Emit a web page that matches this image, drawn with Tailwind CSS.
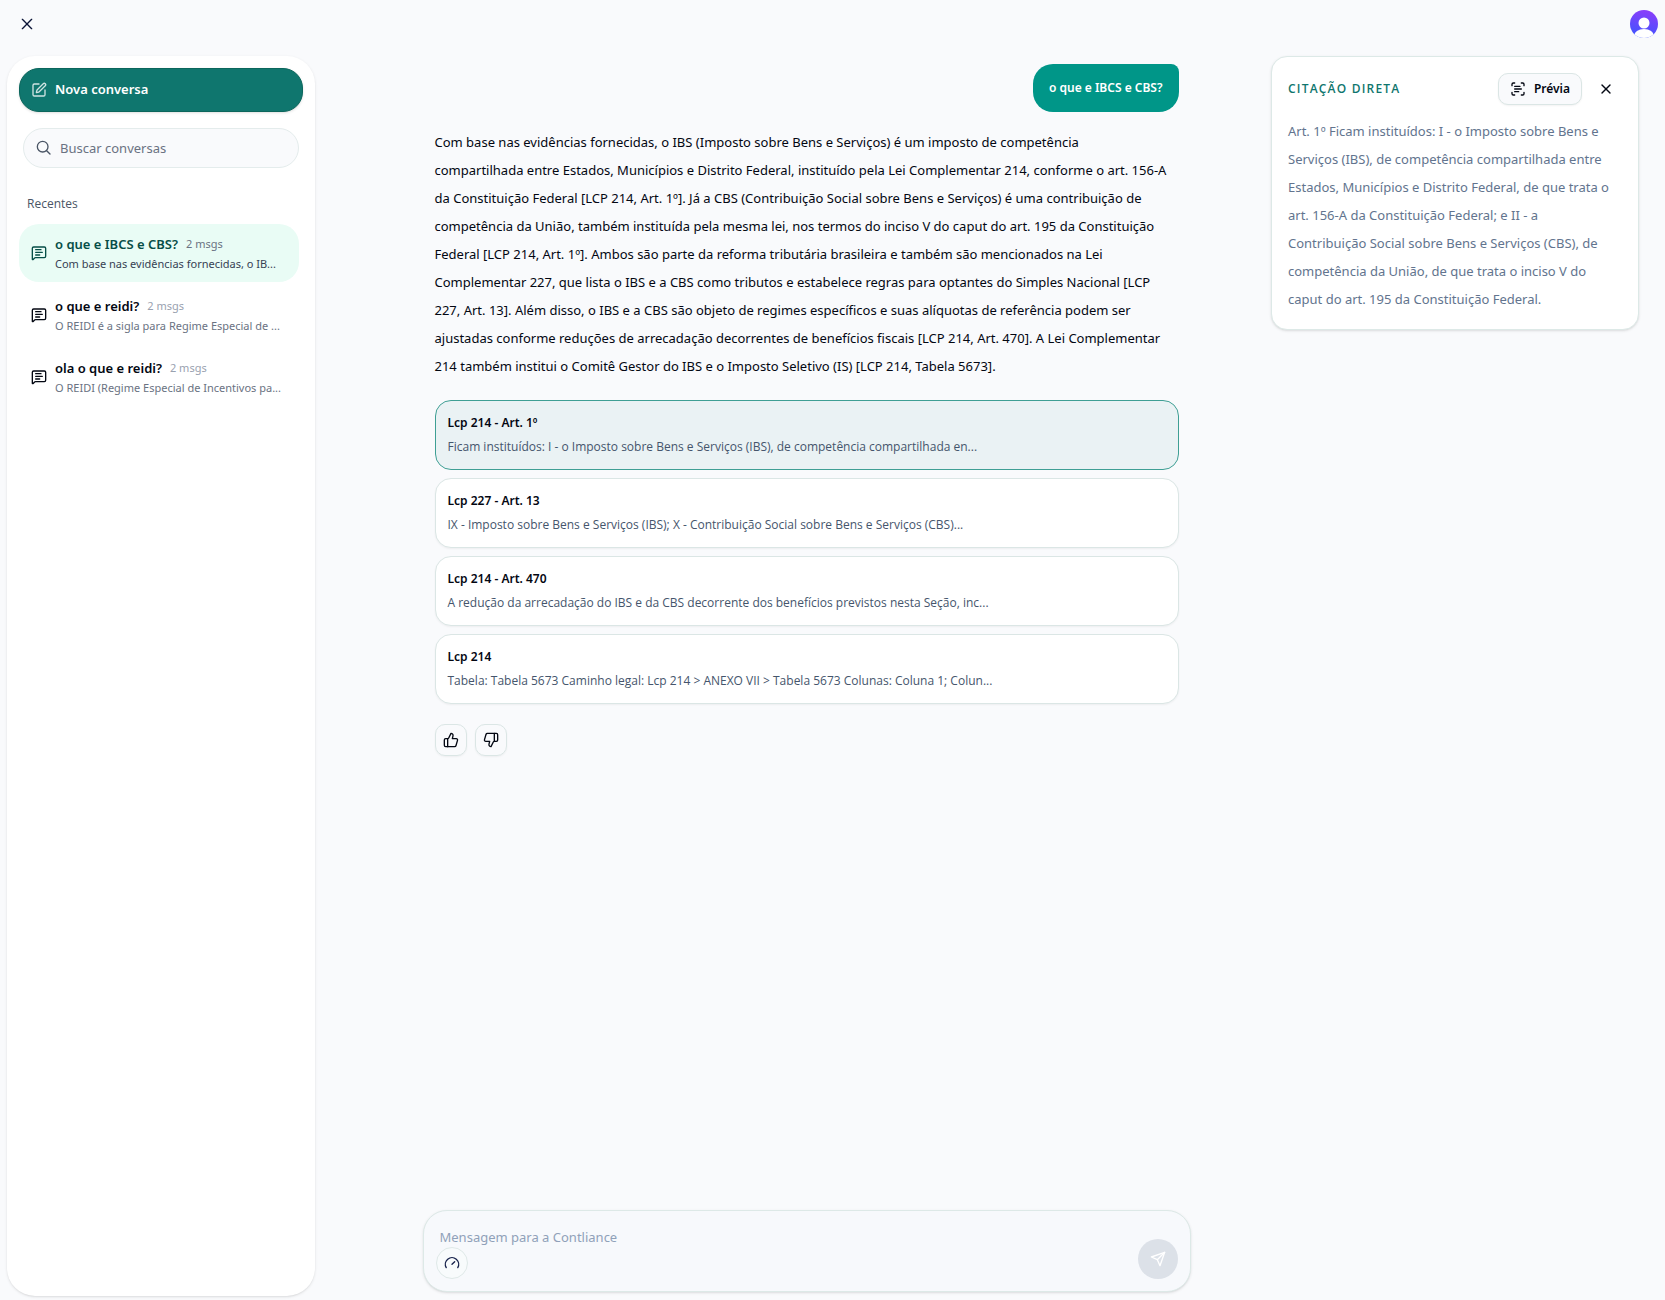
<!DOCTYPE html>
<html lang="pt-BR">
<head>
    <meta charset="UTF-8">
    <meta name="viewport" content="width=device-width, initial-scale=1.0">
    <title>Contliance</title>
    <script src="https://cdn.jsdelivr.net/npm/@tailwindcss/browser@4"></script>
</head>
<body class="flex h-screen flex-col overflow-hidden bg-[#f9fafc] font-['Noto_Sans',sans-serif] text-[13px] text-gray-950">
    <!-- Topo -->
    <header class="flex h-12 shrink-0 items-center justify-between pl-[19px] pr-[7px]">
        <button type="button" aria-label="Fechar menu" class="text-[#0b1437]">
            <svg class="size-4" viewBox="0 0 24 24" fill="none" stroke="currentColor" stroke-width="2" stroke-linecap="round" stroke-linejoin="round"><path d="M19 5 5 19"/><path d="m5 5 14 14"/></svg>
        </button>
        <button type="button" aria-label="Conta">
            <svg class="size-7" viewBox="0 0 28 28">
                <defs>
                    <linearGradient id="avatar" x1="0.6" y1="0" x2="0.4" y2="1">
                        <stop offset="0" stop-color="#8b3dfa"/>
                        <stop offset="1" stop-color="#3d55ff"/>
                    </linearGradient>
                    <clipPath id="circle"><circle cx="14" cy="14" r="14"/></clipPath>
                </defs>
                <g clip-path="url(#circle)">
                    <rect width="28" height="28" fill="url(#avatar)"/>
                    <circle cx="14" cy="13" r="5.5" fill="#fff"/>
                    <ellipse cx="14" cy="26" rx="10" ry="7" fill="#fff"/>
                </g>
            </svg>
        </button>
    </header>

    <div class="flex min-h-0 flex-1 pl-[7px] pr-[26px] pt-2">
        <!-- Barra lateral -->
        <aside class="mb-1 w-[308px] shrink-0 rounded-[28px] bg-white p-3 shadow-sm">
            <button type="button" class="flex h-11 w-full items-center gap-2 rounded-[20px] border border-[#0b665c] bg-[#0f766e] px-[11px] font-semibold text-white shadow-sm">
                <svg class="size-4 opacity-80" viewBox="0 0 24 24" fill="none" stroke="currentColor" stroke-width="2" stroke-linecap="round" stroke-linejoin="round"><path d="M12 3H5a2 2 0 0 0-2 2v14a2 2 0 0 0 2 2h14a2 2 0 0 0 2-2v-7"/><path d="M18.375 2.625a1 1 0 0 1 3 3l-9.013 9.014a2 2 0 0 1-.853.505l-2.873.84a.5.5 0 0 1-.62-.62l.84-2.873a2 2 0 0 1 .506-.852z"/></svg>
                Nova conversa
            </button>

            <label class="mx-1 mt-4 flex h-10 items-center gap-2 rounded-full border border-[#e4ecec] bg-[#f9fafc] px-3">
                <svg class="size-4 shrink-0 text-gray-600" viewBox="0 0 24 24" fill="none" stroke="currentColor" stroke-width="2" stroke-linecap="round" stroke-linejoin="round"><circle cx="10" cy="10" r="8"/><path d="m21 21-5-5"/></svg>
                <input type="search" aria-label="Buscar conversas" placeholder="Buscar conversas" class="w-full bg-transparent pt-px outline-none placeholder:text-gray-500">
            </label>

            <h2 class="mt-6 pl-2 font-['Open_Sans',sans-serif] text-xs leading-6 text-gray-600">Recentes</h2>

            <nav class="mr-1 mt-2 flex flex-col gap-1">
                <a href="#" class="flex h-[58px] items-center gap-2 rounded-[20px] bg-[#e9fcf5] px-3 text-[#064e47]">
                    <svg class="size-4 shrink-0" viewBox="0 0 24 24" fill="none" stroke="currentColor" stroke-width="2" stroke-linecap="round" stroke-linejoin="round"><path d="M22 17a2 2 0 0 1-2 2H6.828a2 2 0 0 0-1.414.586l-2.202 2.202A.71.71 0 0 1 2 21.286V5a2 2 0 0 1 2-2h16a2 2 0 0 1 2 2z"/><path d="M7 7h8"/><path d="M7 11h10"/><path d="M7 15h6"/></svg>
                    <div class="min-w-0 whitespace-nowrap pt-[2px]">
                        <p class="flex items-center gap-2 leading-5"><span class="font-semibold">o que e IBCS e CBS?</span><span class="text-[11px] text-gray-500">2 msgs</span></p>
                        <p class="text-[11px] leading-5 text-gray-700">Com base nas evidências fornecidas, o IB...</p>
                    </div>
                </a>
                <a href="#" class="flex h-[58px] items-center gap-2 rounded-[20px] px-3">
                    <svg class="size-4 shrink-0" viewBox="0 0 24 24" fill="none" stroke="currentColor" stroke-width="2" stroke-linecap="round" stroke-linejoin="round"><path d="M22 17a2 2 0 0 1-2 2H6.828a2 2 0 0 0-1.414.586l-2.202 2.202A.71.71 0 0 1 2 21.286V5a2 2 0 0 1 2-2h16a2 2 0 0 1 2 2z"/><path d="M7 7h8"/><path d="M7 11h10"/><path d="M7 15h6"/></svg>
                    <div class="min-w-0 whitespace-nowrap pt-[2px]">
                        <p class="flex items-center gap-2 leading-5"><span class="font-semibold">o que e reidi?</span><span class="text-[11px] text-gray-400">2 msgs</span></p>
                        <p class="text-[11px] leading-5 text-gray-500">O REIDI é a sigla para Regime Especial de ...</p>
                    </div>
                </a>
                <a href="#" class="flex h-[58px] items-center gap-2 rounded-[20px] px-3">
                    <svg class="size-4 shrink-0" viewBox="0 0 24 24" fill="none" stroke="currentColor" stroke-width="2" stroke-linecap="round" stroke-linejoin="round"><path d="M22 17a2 2 0 0 1-2 2H6.828a2 2 0 0 0-1.414.586l-2.202 2.202A.71.71 0 0 1 2 21.286V5a2 2 0 0 1 2-2h16a2 2 0 0 1 2 2z"/><path d="M7 7h8"/><path d="M7 11h10"/><path d="M7 15h6"/></svg>
                    <div class="min-w-0 whitespace-nowrap pt-[2px]">
                        <p class="flex items-center gap-2 leading-5"><span class="font-semibold">ola o que e reidi?</span><span class="text-[11px] text-gray-400">2 msgs</span></p>
                        <p class="text-[11px] leading-5 text-gray-500">O REIDI (Regime Especial de Incentivos pa...</p>
                    </div>
                </a>
            </nav>
        </aside>

        <!-- Conversa -->
        <main class="flex min-w-0 flex-1 flex-col items-center pb-2 pl-[27px]">
            <section class="flex min-h-0 w-full max-w-3xl flex-1 flex-col px-3 pt-2">
                <p class="self-end rounded-[20px] rounded-tr-lg bg-[#009688] px-4 py-3 text-xs font-semibold leading-6 text-white">o que e IBCS e CBS?</p>

                <p class="mt-4 leading-7">
                    Com base nas evidências fornecidas, o IBS (Imposto sobre Bens e Serviços) é um imposto de competência<br>
                    compartilhada entre Estados, Municípios e Distrito Federal, instituído pela Lei Complementar 214, conforme o art. 156-A<br>
                    da Constituição Federal [LCP 214, Art. 1º]. Já a CBS (Contribuição Social sobre Bens e Serviços) é uma contribuição de<br>
                    competência da União, também instituída pela mesma lei, nos termos do inciso V do caput do art. 195 da Constituição<br>
                    Federal [LCP 214, Art. 1º]. Ambos são parte da reforma tributária brasileira e também são mencionados na Lei<br>
                    Complementar 227, que lista o IBS e a CBS como tributos e estabelece regras para optantes do Simples Nacional [LCP<br>
                    227, Art. 13]. Além disso, o IBS e a CBS são objeto de regimes específicos e suas alíquotas de referência podem ser<br>
                    ajustadas conforme reduções de arrecadação decorrentes de benefícios fiscais [LCP 214, Art. 470]. A Lei Complementar<br>
                    214 também institui o Comitê Gestor do IBS e o Imposto Seletivo (IS) [LCP 214, Tabela 5673].
                </p>

                <div class="mt-5 flex flex-col gap-2">
                    <button type="button" class="h-[70px] rounded-2xl border border-[#3f9f94] bg-[#eaf2f4] px-3 text-left text-xs leading-6">
                        <span class="block font-semibold">Lcp 214 - Art. 1º</span>
                        <span class="block font-['Open_Sans',sans-serif] text-slate-600">Ficam instituídos: I - o Imposto sobre Bens e Serviços (IBS), de competência compartilhada en...</span>
                    </button>
                    <button type="button" class="h-[70px] rounded-2xl border border-[#dbe6e5] bg-white px-3 text-left text-xs leading-6 shadow-xs">
                        <span class="block font-semibold">Lcp 227 - Art. 13</span>
                        <span class="block font-['Open_Sans',sans-serif] text-slate-600">IX - Imposto sobre Bens e Serviços (IBS); X - Contribuição Social sobre Bens e Serviços (CBS)...</span>
                    </button>
                    <button type="button" class="h-[70px] rounded-2xl border border-[#dbe6e5] bg-white px-3 text-left text-xs leading-6 shadow-xs">
                        <span class="block font-semibold">Lcp 214 - Art. 470</span>
                        <span class="block font-['Open_Sans',sans-serif] text-slate-600">A redução da arrecadação do IBS e da CBS decorrente dos benefícios previstos nesta Seção, inc...</span>
                    </button>
                    <button type="button" class="h-[70px] rounded-2xl border border-[#dbe6e5] bg-white px-3 text-left text-xs leading-6 shadow-xs">
                        <span class="block font-semibold">Lcp 214</span>
                        <span class="block font-['Open_Sans',sans-serif] text-slate-600">Tabela: Tabela 5673 Caminho legal: Lcp 214 &gt; ANEXO VII &gt; Tabela 5673 Colunas: Coluna 1; Colun...</span>
                    </button>
                </div>

                <div class="mt-5 flex gap-2">
                    <button type="button" aria-label="Gostei" class="flex size-8 items-center justify-center rounded-[10px] border border-[#dbe6e5] shadow-xs">
                        <svg class="size-4" viewBox="0 0 24 24" fill="none" stroke="currentColor" stroke-width="2" stroke-linecap="round" stroke-linejoin="round"><path d="M7 10v12"/><path d="M15 5.880 14 10h5.830a2 2 0 0 1 1.920 2.560l-2.330 8A2 2 0 0 1 17.500 22H4a2 2 0 0 1-2-2v-8a2 2 0 0 1 2-2h2.760a2 2 0 0 0 1.790-1.110L12 2a3.130 3.130 0 0 1 3 3.880Z"/></svg>
                    </button>
                    <button type="button" aria-label="Não gostei" class="flex size-8 items-center justify-center rounded-[10px] border border-[#dbe6e5] shadow-xs">
                        <svg class="size-4" viewBox="0 0 24 24" fill="none" stroke="currentColor" stroke-width="2" stroke-linecap="round" stroke-linejoin="round"><path d="M17 14V2"/><path d="M9 18.120 10 14H4.170a2 2 0 0 1-1.920-2.560l2.330-8A2 2 0 0 1 6.500 2H20a2 2 0 0 1 2 2v8a2 2 0 0 1-2 2h-2.760a2 2 0 0 0-1.790 1.110L12 22a3.130 3.130 0 0 1-3-3.880Z"/></svg>
                    </button>
                </div>
            </section>

            <!-- Campo de mensagem -->
            <form class="flex w-full max-w-3xl items-end justify-between rounded-3xl border border-[#dde9e7] bg-[#f7f9fc] p-3 pt-4 shadow-sm">
                <div class="flex flex-1 flex-col items-start">
                    <textarea rows="1" aria-label="Mensagem" placeholder="Mensagem para a Contliance" class="block h-5 w-full resize-none bg-transparent px-1 leading-5 outline-none placeholder:text-slate-400"></textarea>
                    <button type="button" aria-label="Modo de resposta" class="flex size-8 items-center justify-center rounded-full border border-[#dfe9e8] bg-[#f8fbfc] text-[#15204a]">
                        <svg class="size-4" viewBox="0 0 24 24" fill="none" stroke="currentColor" stroke-width="2" stroke-linecap="round" stroke-linejoin="round"><path d="m12 14 4-4"/><path d="M3.340 19a10 10 0 1 1 17.320 0"/></svg>
                    </button>
                </div>
                <button type="submit" aria-label="Enviar" disabled class="flex size-10 items-center justify-center rounded-full bg-[#dce1e8] text-white">
                    <svg class="size-4" viewBox="0 0 24 24" fill="none" stroke="currentColor" stroke-width="2" stroke-linecap="round" stroke-linejoin="round"><path d="M22 2 15 22l-4-9-9-4Z"/><path d="M22 2 11 13"/></svg>
                </button>
            </form>
        </main>

        <!-- Citação -->
        <aside class="w-[368px] shrink-0 self-start rounded-2xl border border-[#dde9e7] bg-white p-4 shadow-sm">
            <div class="flex items-center gap-2">
                <h2 class="flex-1 font-['Open_Sans',sans-serif] text-xs font-semibold tracking-widest text-[#0f766e]">CITAÇÃO DIRETA</h2>
                <button type="button" class="flex h-8 items-center gap-2 rounded-[10px] border border-[#dbe6e5] bg-[#f9fafc] px-[11px] text-xs font-semibold shadow-xs">
                    <svg class="size-4" viewBox="0 0 24 24" fill="none" stroke="currentColor" stroke-width="2" stroke-linecap="round" stroke-linejoin="round"><path d="M3 7V5a2 2 0 0 1 2-2h2"/><path d="M17 3h2a2 2 0 0 1 2 2v2"/><path d="M21 17v2a2 2 0 0 1-2 2h-2"/><path d="M7 21H5a2 2 0 0 1-2-2v-2"/><path d="M7 8h8"/><path d="M7 12h10"/><path d="M7 16h6"/></svg>
                    Prévia
                </button>
                <button type="button" aria-label="Fechar citação" class="flex size-8 items-center justify-center">
                    <svg class="size-4" viewBox="0 0 24 24" fill="none" stroke="currentColor" stroke-width="2" stroke-linecap="round" stroke-linejoin="round"><path d="M18 6 6 18"/><path d="m6 6 12 12"/></svg>
                </button>
            </div>
            <p class="mt-3 leading-7 text-slate-500">
                Art. 1º Ficam instituídos: I - o Imposto sobre Bens e<br>
                Serviços (IBS), de competência compartilhada entre<br>
                Estados, Municípios e Distrito Federal, de que trata o<br>
                art. 156-A da Constituição Federal; e II - a<br>
                Contribuição Social sobre Bens e Serviços (CBS), de<br>
                competência da União, de que trata o inciso V do<br>
                caput do art. 195 da Constituição Federal.
            </p>
        </aside>
    </div>
</body>
</html>
